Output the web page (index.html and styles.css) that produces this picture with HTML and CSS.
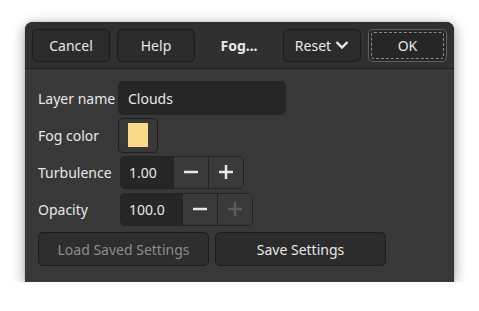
FILE: index.html
```html
<!DOCTYPE html>
<html>
<head>
  <title>Fog</title>
  <link rel="stylesheet" href="styles.css">
</head>
<body>
  <div class="window">
    <div class="header">
      <button class="btn head-btn">Cancel</button>
      <button class="btn head-btn">Help</button>
      <div class="title">Fog...</div>
      <button class="btn head-btn reset">Reset
        <svg width="14" height="10" viewBox="0 0 14 10"><polyline points="1.5,2 7,7.5 12.5,2" fill="none" stroke="#e8e8e8" stroke-width="2.4"/></svg>
      </button>
      <button class="btn head-btn ok"><span class="focus">OK</span></button>
    </div>

    <div class="content">
      <div class="form">
        <label>Layer name</label>
        <div class="entry name-entry">Clouds</div>

        <label>Fog color</label>
        <div><button class="btn color-btn"><span class="swatch"></span></button></div>

        <label>Turbulence</label>
        <div class="spin">
          <div class="entry spin-entry">1.00</div>
          <div class="spin-btn">
            <svg width="14" height="14" viewBox="0 0 14 14"><line x1="0" y1="7" x2="14" y2="7" stroke="#e8e8e8" stroke-width="2.5"/></svg>
          </div>
          <div class="spin-btn">
            <svg width="14" height="14" viewBox="0 0 14 14"><line x1="0" y1="7" x2="14" y2="7" stroke="#e8e8e8" stroke-width="2.5"/><line x1="7" y1="0" x2="7" y2="14" stroke="#e8e8e8" stroke-width="2.5"/></svg>
          </div>
        </div>

        <label>Opacity</label>
        <div class="spin">
          <div class="entry spin-entry wide">100.0</div>
          <div class="spin-btn">
            <svg width="14" height="14" viewBox="0 0 14 14"><line x1="0" y1="7" x2="14" y2="7" stroke="#e8e8e8" stroke-width="2.5"/></svg>
          </div>
          <div class="spin-btn">
            <svg width="14" height="14" viewBox="0 0 14 14"><line x1="0" y1="7" x2="14" y2="7" stroke="#5c5c5c" stroke-width="2.5"/><line x1="7" y1="0" x2="7" y2="14" stroke="#5c5c5c" stroke-width="2.5"/></svg>
          </div>
        </div>
      </div>

      <div class="actions">
        <button class="btn action-btn disabled">Load Saved Settings</button>
        <button class="btn action-btn">Save Settings</button>
      </div>
    </div>
  </div>
</body>
</html>
```

FILE: styles.css
```css
body {
  margin: 0;
  background-color: #ffffff;
  font-family: "Noto Sans", sans-serif;
  font-size: 14px;
  color: #e8e8e8;
}

.window {
  margin: 22px 0 0 25px;
  width: 429px;
  height: 260px;
  background-color: #383838;
  border-radius: 8px 8px 0 0;
  box-shadow: 0 3px 14px rgba(0, 0, 0, 0.4), 0 0 1px rgba(0, 0, 0, 0.5);
  overflow: hidden;
}

.header {
  display: flex;
  align-items: center;
  gap: 7px;
  height: 46px;
  padding: 0 7px;
  background-color: #303030;
  border-bottom: 1px solid #1f1f1f;
}

.btn {
  font-family: inherit;
  font-size: 14px;
  color: #e8e8e8;
  background-color: #2b2b2b;
  border: 1px solid #1c1c1c;
  border-radius: 5px;
  padding: 0;
  box-sizing: border-box;
}

.head-btn {
  width: 78px;
  height: 33px;
}

.title {
  flex: 1;
  text-align: center;
  font-weight: bold;
}

.reset {
  display: flex;
  align-items: center;
  justify-content: center;
  gap: 4px;
}

.ok {
  width: 79px;
  background-color: #262626;
  border-color: #606060;
  padding: 2px;
}

.focus {
  display: flex;
  align-items: center;
  justify-content: center;
  height: 100%;
  border: 1px dashed #8a8a8a;
  border-radius: 3px;
  box-sizing: border-box;
}

.content {
  padding: 12px 13px;
}

.form {
  display: grid;
  grid-template-columns: 80px auto;
  grid-auto-rows: 34px;
  row-gap: 3px;
  align-items: center;
}

.entry {
  background-color: #262626;
  border-radius: 5px;
  height: 34px;
  box-sizing: border-box;
  padding: 0 10px;
  display: flex;
  align-items: center;
}

.name-entry {
  width: 168px;
}

.color-btn {
  width: 40px;
  height: 35px;
  background-color: #383838;
  border-color: #1e1e1e;
  display: flex;
  align-items: center;
  justify-content: center;
}

.swatch {
  width: 20px;
  height: 24px;
  background-color: #f8da8a;
}

.spin {
  display: flex;
  width: max-content;
  margin-left: 2px;
  border: 1px solid #232323;
  border-radius: 5px;
  overflow: hidden;
  height: 33px;
  box-sizing: border-box;
}

.spin-entry {
  width: 52px;
  height: 31px;
  border-radius: 0;
  padding: 0 8px;
}

.spin-entry.wide {
  width: 61px;
}

.spin-btn {
  width: 35px;
  box-sizing: border-box;
  display: flex;
  align-items: center;
  justify-content: center;
  background-color: #3a3a3a;
  border-left: 1px solid #232323;
}

.actions {
  display: flex;
  gap: 6px;
  margin-top: 6px;
}

.action-btn {
  width: 171px;
  height: 34px;
}

.disabled {
  color: #8c8c8c;
  background-color: #2e2e2e;
}
```
